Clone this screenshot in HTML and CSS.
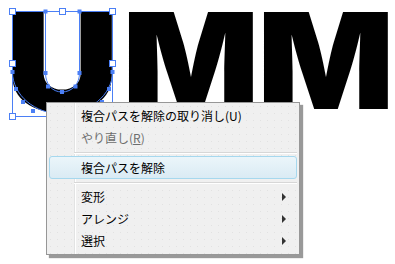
FILE: index.html
```html
<!DOCTYPE html>
<html>
<head>
  <meta charset="UTF-8">
  <title>複合パスを解除</title>
  <link rel="stylesheet" href="styles.css">
</head>
<body>
  <div class="canvas">
    <div class="artwork">
      <span class="glyph glyph-u">U</span>
      <span class="glyph glyph-m">M</span>
      <span class="glyph glyph-m glyph-last">M</span>
    </div>

    <!-- 選択中のパスとバウンディングボックス -->
    <svg class="selection" width="130" height="125" viewBox="0 0 130 125">
      <rect class="bbox" x="12.5" y="11.5" width="100" height="105"/>
      <path class="path" d="M12.5 11.5 V72 C12.5 95 35 114 62 114 C89 114 112.5 95 112.5 72 V11.5 H79.5 V73 C79.5 84 72 92 62 92 C52 92 45.5 84 45.5 73 V11.5 Z"/>
      <g class="handle">
        <rect x="9.5" y="8.5" width="6" height="6"/>
        <rect x="59.5" y="8.5" width="6" height="6"/>
        <rect x="109.5" y="8.5" width="6" height="6"/>
        <rect x="9.5" y="60.5" width="6" height="6"/>
        <rect x="109.5" y="60.5" width="6" height="6"/>
        <rect x="9.5" y="113.5" width="6" height="6"/>
      </g>
      <g class="anchor">
        <rect x="43.5" y="9.5" width="4" height="4"/>
        <rect x="77.5" y="9.5" width="4" height="4"/>
        <rect x="43.5" y="71" width="4" height="4"/>
        <rect x="77.5" y="71" width="4" height="4"/>
        <rect x="46" y="84.5" width="4" height="4"/>
        <rect x="60" y="90" width="4" height="4"/>
        <rect x="73.5" y="84.5" width="4" height="4"/>
        <rect x="10.5" y="70" width="4" height="4"/>
        <rect x="14" y="87" width="4" height="4"/>
        <rect x="21" y="100" width="4" height="4"/>
        <rect x="31" y="109" width="4" height="4"/>
        <rect x="110.5" y="70" width="4" height="4"/>
        <rect x="107" y="87" width="4" height="4"/>
        <rect x="100" y="100" width="4" height="4"/>
      </g>
    </svg>

    <div class="context-menu">
      <div class="menu-item">複合パスを解除の取り消し(U)</div>
      <div class="menu-item disabled">やり直し(<u>R</u>)</div>
      <div class="menu-sep"></div>
      <div class="menu-item hover">複合パスを解除</div>
      <div class="menu-sep"></div>
      <div class="menu-item submenu">変形</div>
      <div class="menu-item submenu">アレンジ</div>
      <div class="menu-item submenu">選択</div>
    </div>
  </div>
</body>
</html>
```
FILE: styles.css
```css
body {
  margin: 0;
  background-color: #FFFFFF;
}

.canvas {
  position: relative;
  width: 395px;
  height: 264px;
  overflow: hidden;
  background-color: #FFFFFF;
}

/* アートワークの文字 */
.artwork {
  display: flex;
  font-family: Inter, "Liberation Sans", sans-serif;
  font-weight: 900;
  font-size: 133px;
  line-height: 121px;
  height: 121px;
  color: #000000;
}

.glyph {
  display: block;
  text-align: center;
  transform-origin: 50% 10px;
}

.glyph-u {
  width: 124px;
  transform: scale(1.19, 1.03);
}

.glyph-m {
  width: 134px;
  transform: scaleX(1.08);
}

.glyph-last {
  width: 136px;
}

/* 選択状態 */
.selection {
  position: absolute;
  top: 0;
  left: 0;
}

.selection .bbox,
.selection .path {
  fill: none;
  stroke: #4B7FF5;
  stroke-width: 1;
}

.selection .handle rect {
  fill: #FFFFFF;
  stroke: #4B7FF5;
  stroke-width: 1;
}

.selection .anchor rect {
  fill: #4B7FF5;
}

/* コンテキストメニュー */
.context-menu {
  position: absolute;
  top: 102px;
  left: 46px;
  width: 252px;
  padding: 2px 0;
  border: 1px solid #979797;
  background-color: #F0F0F0;
  background-image:
    linear-gradient(to right, transparent 27px, #E2E3E3 27px, #E2E3E3 28px, #FFFFFF 28px, #FFFFFF 29px, transparent 29px),
    radial-gradient(circle, #E2E2E2 0.7px, transparent 1px);
  background-size: 100% 100%, 7px 7px;
  box-shadow: 3px 3px 1px rgba(0, 0, 0, 0.4);
  font-family: "Noto Sans CJK JP", sans-serif;
  font-size: 12px;
  color: #000000;
}

.menu-item {
  position: relative;
  height: 20px;
  line-height: 20px;
  margin: 0 2px;
  padding-left: 31px;
  border: 1px solid transparent;
  border-radius: 3px;
  white-space: nowrap;
}

.menu-item.disabled {
  color: #6D6D6D;
}

.menu-item.hover {
  height: 21px;
  line-height: 21px;
  border-color: #A6D8EE;
  background: linear-gradient(#EBF5FA, #DAEBF4);
}

.menu-item.submenu::after {
  content: "";
  position: absolute;
  right: 10px;
  top: 6px;
  border-top: 4px solid transparent;
  border-bottom: 4px solid transparent;
  border-left: 4px solid #333333;
}

.menu-sep {
  height: 7px;
  margin-left: 27px;
  margin-right: 2px;
  background: linear-gradient(transparent 3px, #D7D7D7 3px, #D7D7D7 4px, #FFFFFF 4px, #FFFFFF 5px, transparent 5px);
}
```
